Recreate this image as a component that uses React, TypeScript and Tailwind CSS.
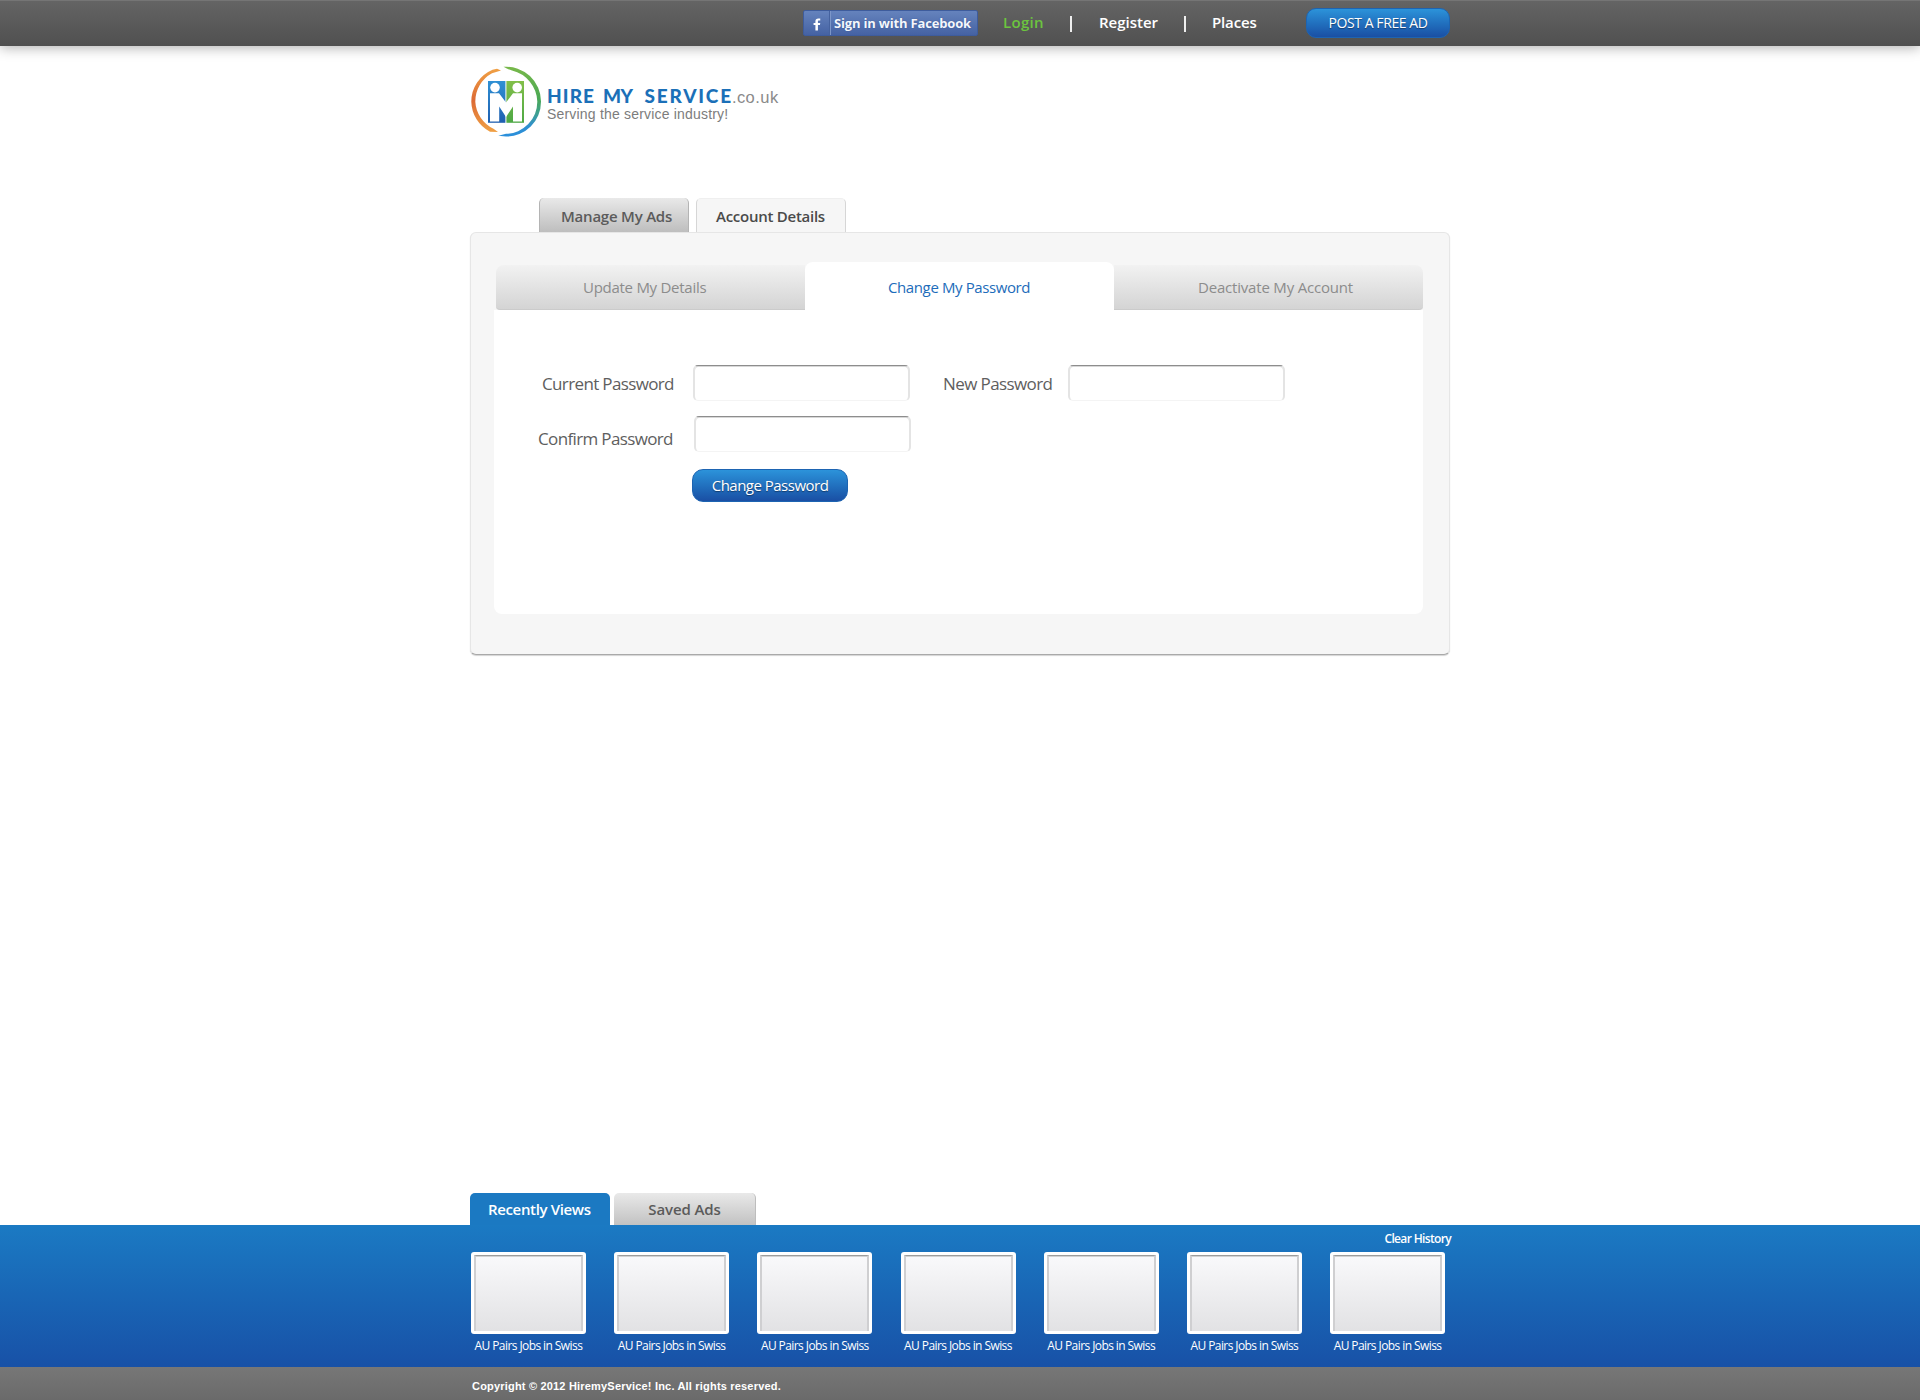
import type { ReactNode } from "react";

function LogoMark() {
  return (
    <svg viewBox="0 0 72 72" className="h-[72px] w-[72px] shrink-0" aria-hidden="true">
      <defs>
        <linearGradient id="ringRight" x1="0" y1="0" x2="0" y2="1">
          <stop offset="0" stopColor="#78b84a" />
          <stop offset="0.45" stopColor="#4aa853" />
          <stop offset="0.68" stopColor="#3d9f94" />
          <stop offset="0.85" stopColor="#2f8fd0" />
          <stop offset="1" stopColor="#2a8fdc" />
        </linearGradient>
        <linearGradient id="ringLeft" x1="0" y1="0" x2="0" y2="1">
          <stop offset="0" stopColor="#f0a044" />
          <stop offset="0.5" stopColor="#dc6a34" />
          <stop offset="1" stopColor="#f0a044" />
        </linearGradient>
        <linearGradient id="blueHalf" x1="0" y1="0" x2="0" y2="1">
          <stop offset="0" stopColor="#2f90d4" />
          <stop offset="1" stopColor="#1f5fb0" />
        </linearGradient>
        <linearGradient id="greenHalf" x1="0" y1="0" x2="0" y2="1">
          <stop offset="0" stopColor="#82bf49" />
          <stop offset="1" stopColor="#4da845" />
        </linearGradient>
      </defs>
      <path
        d="M33.5 0.8 A34.8 34.8 0 0 1 71 35.8 A34.8 34.8 0 0 1 36 70.6 L28.3 69.8 L36 67.8 A32 32 0 0 0 67.3 35.5 A33 33 0 0 0 42 4.6 Q38 3.4 33.5 0.8 Z"
        fill="url(#ringRight)"
      />
      <path
        d="M31 4.6 L27 2.8 L22.5 3.8 A34.8 34.8 0 0 0 1.3 35.8 A34.8 34.8 0 0 0 20 65.8 L28 66 L23.5 62.8 A32 32 0 0 1 5.3 35.8 A32 32 0 0 1 22 7.2 Z"
        fill="url(#ringLeft)"
      />
      <rect x="18" y="15" width="17.4" height="41.8" fill="url(#blueHalf)" />
      <rect x="36.4" y="15" width="17.6" height="41.8" fill="url(#greenHalf)" />
      <circle cx="25" cy="21.6" r="4.8" fill="#fff" />
      <circle cx="47.2" cy="21.6" r="4.8" fill="#fff" />
      <path
        d="M20 27.2 H29 L36 36.6 L43 27.2 H52 V55.4 H43 V40.5 L36 51 L29.2 40.5 V55.4 H20 Z"
        fill="#fff"
      />
    </svg>
  );
}

function Logo() {
  return (
    <div className="flex">
      <LogoMark />
      <div className="ml-[5px] pt-[18px] whitespace-nowrap">
        <div className="flex items-baseline leading-[24px]">
          <span className="font-['Lato',sans-serif] text-[19px] font-black tracking-[1.1px] text-[#1b70b8]">HIRE</span>
          <span className="ml-[8px] font-['Lato',sans-serif] text-[19px] font-black tracking-[-0.6px] text-[#1b70b8]">MY</span>
          <span className="ml-[12px] font-['Lato',sans-serif] text-[19px] font-black tracking-[1.8px] text-[#1b70b8]">SERVICE</span>
          <span className="-ml-px font-['Liberation_Sans',sans-serif] text-[16.5px] tracking-[0.45px] text-[#8a8a8a]">.co.uk</span>
        </div>
        <div className="-mt-[5px] font-['Liberation_Sans',sans-serif] text-[14px] leading-[20px] tracking-[0.19px] text-[#7c7c7c]">
          Serving the service industry!
        </div>
      </div>
    </div>
  );
}

function TopBar() {
  return (
    <header className="h-[46px] border-t border-[#757575] bg-linear-to-b from-[#646464] to-[#505050] shadow-[0_2px_12px_rgba(0,0,0,0.3)]">
      <div className="mx-auto flex w-[984px] pl-[335px] text-[15px] leading-[43px] font-semibold whitespace-nowrap text-white">
        <a className="mt-[9px] flex h-[26px] w-[175px] items-stretch rounded-[2px] border border-[#3e5c9c] bg-linear-to-b from-[#6583bd] to-[#4562a3]">
          <span className="flex w-[26px] items-center justify-center border-r border-[#45629f]">
            <svg viewBox="0 0 8 14" className="mt-[2px] h-[13px] w-[8px]" aria-hidden="true">
              <path d="M2.3 13.5V7.6H0.3V5.3H2.3V3.6C2.3 1.5 3.5 0.5 5.4 0.5H7.5V2.8H6.1C5.2 2.8 5 3.2 5 3.9V5.3H7.5L7.2 7.6H5V13.5Z" fill="#fff" />
            </svg>
          </span>
          <span className="border-l border-[#7c96c8] pl-[3px] text-[13px] leading-[24px] font-bold tracking-[-0.18px] text-[#f4f7fd] [text-shadow:0_0_1px_#2c4a86]">
            Sign in with Facebook
          </span>
        </a>
        <a className="ml-[25px] w-[67px] tracking-[0.3px] text-[#6cc43f]">Login</a>
        <span className="mt-[15px] h-[16px] w-[2px] bg-white/90" />
        <a className="ml-[27px] w-[85px]">Register</a>
        <span className="mt-[15px] h-[16px] w-[2px] bg-white/90" />
        <a className="ml-[26px] w-[94px] tracking-[-0.15px]">Places</a>
        <button className="mt-[7px] h-[30px] w-[144px] rounded-[10px] border border-[#1d64b2] bg-linear-to-b from-[#2c93da] to-[#1a4fa4] text-center text-[14px] leading-[28px] font-normal tracking-[-0.41px] [text-shadow:0_1px_1px_rgba(0,0,0,0.4)]">
          POST A FREE AD
        </button>
      </div>
    </header>
  );
}

function Field() {
  return (
    <input
      type="password"
      className="h-[36px] w-[217px] rounded-[5px] border-x-2 border-t border-b border-x-[#e4e4e4] border-t-[#8d8d8d] border-b-[#f4f4f4] bg-white shadow-[inset_0_1px_0_#d8d8d8] outline-none"
    />
  );
}

function Label({ children, className }: { children: ReactNode; className: string }) {
  return <label className={"text-[17px] whitespace-nowrap text-[#5e5e5e] " + className}>{children}</label>;
}

function AccountPanel() {
  return (
    <section>
      <nav className="flex gap-[7px] pl-[69px] text-[15px] leading-[36px] font-semibold whitespace-nowrap">
        <a className="h-[34px] w-[150px] rounded-t-[5px] border-x border-x-[#b4b4b4] bg-linear-to-b from-[#e9e9e9] to-[#bebebe] pl-[21px] tracking-[-0.22px] text-[#5b5b5b]">
          Manage My Ads
        </a>
        <a className="h-[34px] w-[150px] rounded-t-[5px] border-x border-t border-x-[#d6d6d6] border-t-[#efefef] bg-[#f6f6f6] pl-[19px] leading-[35px] tracking-[-0.26px] text-[#4a4a4a]">
          Account Details
        </a>
      </nav>
      <div className="h-[423px] rounded-[6px] border border-[#e6e6e6] border-b-[#a9a9a9] bg-[#f6f6f6] px-[23px] pt-[29px] shadow-[0_1px_1px_#d4d4d4]">
        <nav className="flex items-end text-[15px] whitespace-nowrap">
          <a className="ml-[2px] h-[45px] w-[309px] rounded-tl-[8px] rounded-bl-[4px] border-b border-[#cbcbcb] bg-linear-to-b from-[#f2f2f2] to-[#d4d4d4] pl-[87px] leading-[44px] tracking-[-0.27px] text-[#8c8c8c]">
            Update My Details
          </a>
          <a className="h-[48px] w-[309px] rounded-t-[8px] bg-white pl-[83px] leading-[50px] tracking-[-0.39px] text-[#1d6cba]">
            Change My Password
          </a>
          <a className="h-[45px] w-[309px] rounded-tr-[8px] rounded-br-[4px] border-b border-[#cbcbcb] bg-linear-to-b from-[#f2f2f2] to-[#d4d4d4] pl-[84px] leading-[44px] tracking-[-0.19px] text-[#8c8c8c]">
            Deactivate My Account
          </a>
        </nav>
        <form className="h-[304px] w-[929px] rounded-b-[8px] bg-white pt-[55px]">
          <div className="flex">
            <Label className="ml-[48px] w-[151px] leading-[37px] tracking-[-0.64px]">Current Password</Label>
            <Field />
            <Label className="ml-[33px] w-[125px] leading-[37px] tracking-[-0.6px]">New Password</Label>
            <Field />
          </div>
          <div className="mt-[14px] flex h-[36px]">
            <Label className="ml-[44px] w-[156px] leading-[45px] tracking-[-0.64px]">Confirm Password</Label>
            <Field />
          </div>
          <button
            type="button"
            className="mt-[17px] ml-[198px] block h-[33px] w-[156px] rounded-[11px] border border-[#1d64b2] bg-linear-to-b from-[#2c93da] to-[#1a4fa4] text-center text-[15px] leading-[31px] tracking-[-0.51px] text-white [text-shadow:0_1px_1px_rgba(0,0,0,0.4)]"
          >
            Change Password
          </button>
        </form>
      </div>
    </section>
  );
}

const recentAds = Array.from({ length: 7 }, () => "AU Pairs Jobs in Swiss");

function RecentAds() {
  return (
    <section>
      <nav className="mx-auto flex w-[980px] text-[15px] leading-[32px] font-semibold whitespace-nowrap">
        <a className="h-[32px] w-[140px] rounded-t-[5px] bg-[#1b79c2] pl-[18px] tracking-[-0.35px] text-white">Recently Views</a>
        <a className="ml-[4px] h-[32px] w-[142px] rounded-t-[5px] border-r border-r-[#bdbdbd] bg-linear-to-b from-[#e9e9e9] to-[#c2c2c2] text-center tracking-[-0.11px] text-[#5b5b5b]">
          Saved Ads
        </a>
      </nav>
      <div className="h-[142px] bg-linear-to-b from-[#1b7ac3] to-[#1851a7]">
        <div className="mx-auto w-[982px] pl-[2px] text-[12px] text-white">
          <div className="flex h-[27px] justify-end leading-[27px] font-semibold tracking-[-0.65px]">
            <a>Clear History</a>
          </div>
          <div className="flex gap-[28.2px]">
            {recentAds.map((title, i) => (
              <figure key={i} className="w-[115px] shrink-0">
                <div className="h-[82px] rounded-[3px] bg-white p-[3px]">
                  <div className="h-full border-x-2 border-t border-x-[#cfcfd1] border-t-[#9c9c9c] bg-linear-to-b from-[#f9f9fb] to-[#e2e2e4] shadow-[inset_0_1px_0_#d2d2d2]" />
                </div>
                <figcaption className="pl-[3.5px] leading-[23px] tracking-[-0.58px] whitespace-nowrap">{title}</figcaption>
              </figure>
            ))}
          </div>
        </div>
      </div>
    </section>
  );
}

export default function App() {
  return (
    <div className="flex h-[1400px] flex-col bg-white font-['Open_Sans','Noto_Sans',sans-serif]">
      <TopBar />
      <main className="mx-auto w-[980px] grow">
        <div className="pt-[20px] pb-[60px]">
          <Logo />
        </div>
        <AccountPanel />
      </main>
      <RecentAds />
      <footer className="h-[33px] bg-linear-to-b from-[#777777] to-[#6a6a6a]">
        <div className="mx-auto w-[980px] pt-[5px] pl-[2px] font-['Liberation_Sans',sans-serif] text-[11px] leading-[28px] font-bold tracking-[0.19px] text-white">
          Copyright © 2012 HiremyService! Inc. All rights reserved.
        </div>
      </footer>
    </div>
  );
}
